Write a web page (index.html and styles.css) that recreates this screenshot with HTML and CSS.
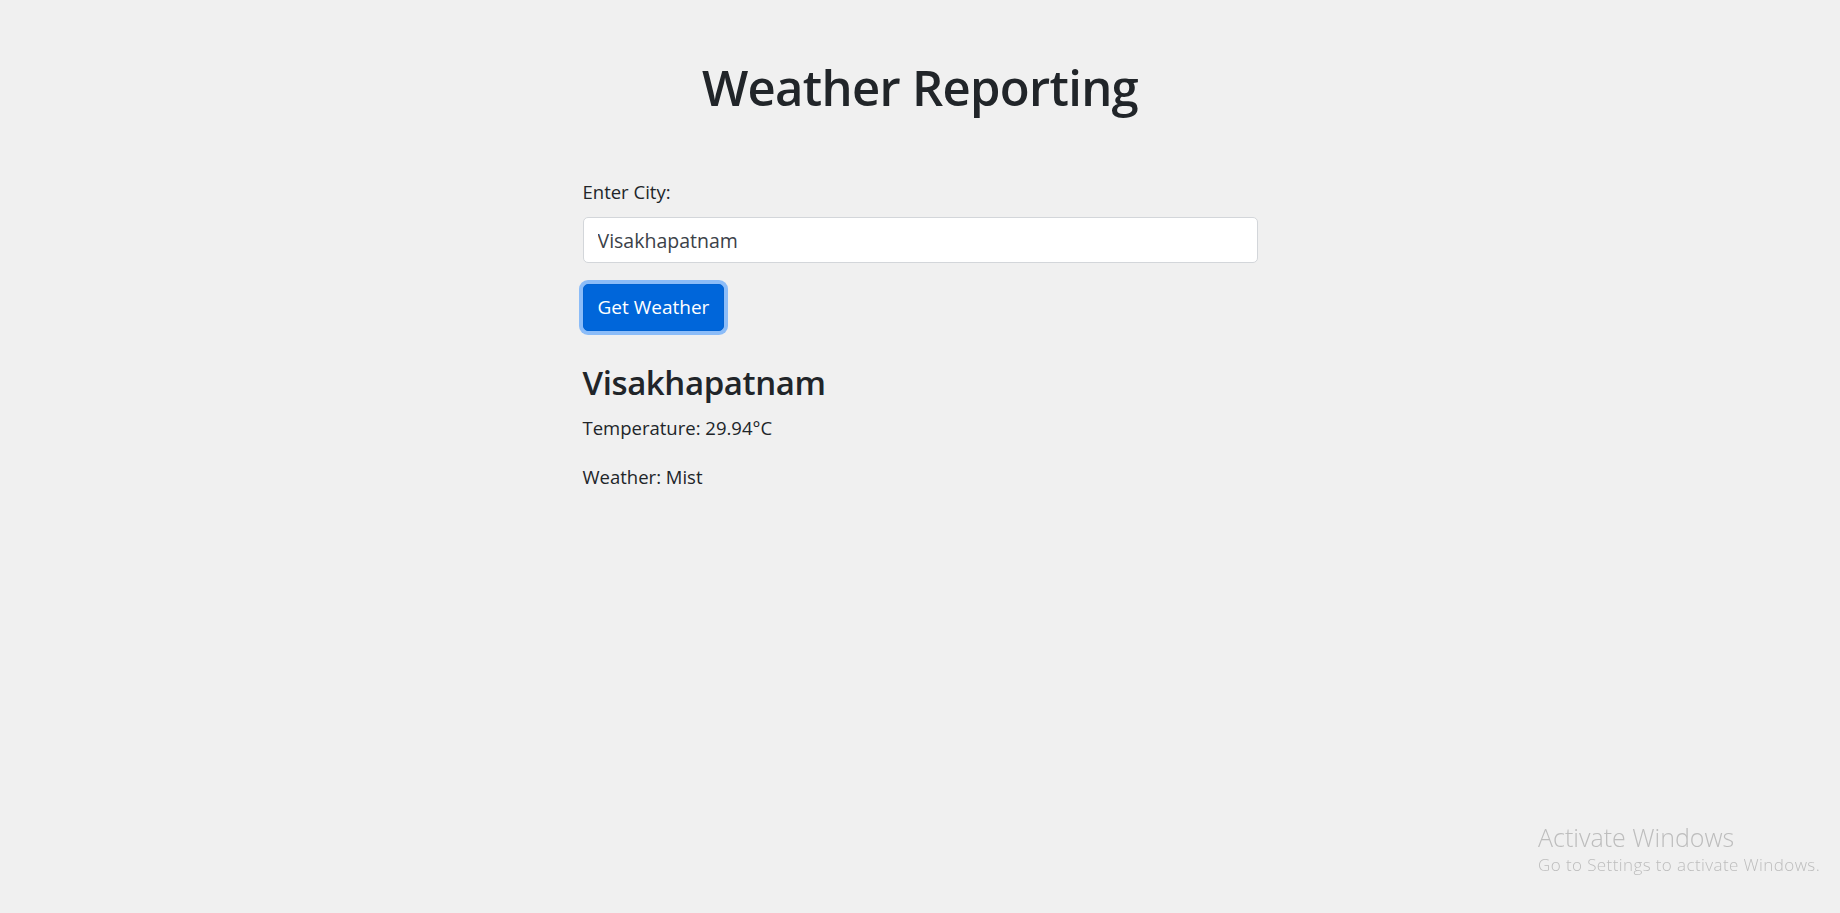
FILE: index.html
```html
<!DOCTYPE html>
<html lang="en">
<head>
<meta charset="utf-8">
<title>Weather Reporting</title>
<link rel="stylesheet" href="styles.css">
</head>
<body>
<main class="page">
  <h1 class="title">Weather Reporting</h1>
  <form class="city-form">
    <label class="field-label" for="city">Enter City:</label>
    <input class="field-input" id="city" type="text" value="Visakhapatnam">
    <button class="btn-primary" type="button">Get Weather</button>
  </form>
  <section class="result">
    <h3 class="result-city">Visakhapatnam</h3>
    <p class="result-line">Temperature: 29.94°C</p>
    <p class="result-line">Weather: Mist</p>
  </section>
</main>
<div class="activate">
  <div class="activate-title">Activate Windows</div>
  <div class="activate-sub">Go to Settings to activate Windows.</div>
</div>
</body>
</html>
```

FILE: styles.css
```css
* { box-sizing: border-box; }
html, body { margin: 0; padding: 0; }
body {
  background: #f0f0f0;
  color: #212529;
  font-family: "Open Sans", "Noto Sans", sans-serif;
  height: 913px;
  overflow: hidden;
}
.page {
  width: 675px;
  margin: 0 auto;
  padding-top: 57px;
}
.title {
  margin: 0 0 61px;
  font-size: 49px;
  line-height: 60px;
  font-weight: 600;
  letter-spacing: -0.7px;
  text-align: center;
}
.city-form {
  display: flex;
  flex-direction: column;
  align-items: flex-start;
}
.field-label {
  font-size: 18.5px;
  line-height: 27px;
  margin-bottom: 12px;
}
.field-input {
  width: 100%;
  height: 46px;
  padding: 7px 14px;
  font-family: inherit;
  font-size: 19.5px;
  line-height: 30px;
  color: #3b4148;
  background: #fff;
  border: 1px solid #d3d6da;
  border-radius: 5px;
  outline: none;
}
.btn-primary {
  margin-top: 21px;
  height: 47px;
  padding: 0 14px;
  font-family: inherit;
  font-size: 19px;
  line-height: 45px;
  color: #fff;
  background: #0066da;
  border: 1px solid #0062d2;
  border-radius: 5px;
  box-shadow: 0 0 0 4px #8bbcf8;
}
.result { margin-top: 31px; }
.result-city {
  margin: 0 0 10px;
  font-size: 33px;
  line-height: 42px;
  font-weight: 600;
  letter-spacing: -0.4px;
}
.result-line {
  margin: 0 0 22px;
  font-size: 18.5px;
  line-height: 27px;
}
.activate {
  position: fixed;
  left: 1538px;
  top: 821px;
  color: #bdbdbd;
  font-family: "Open Sans", "Noto Sans", sans-serif;
  font-weight: 300;
}
.activate-title { font-size: 25px; line-height: 32px; }
.activate-sub { font-size: 17px; line-height: 24px; letter-spacing: 0.4px; }
```
